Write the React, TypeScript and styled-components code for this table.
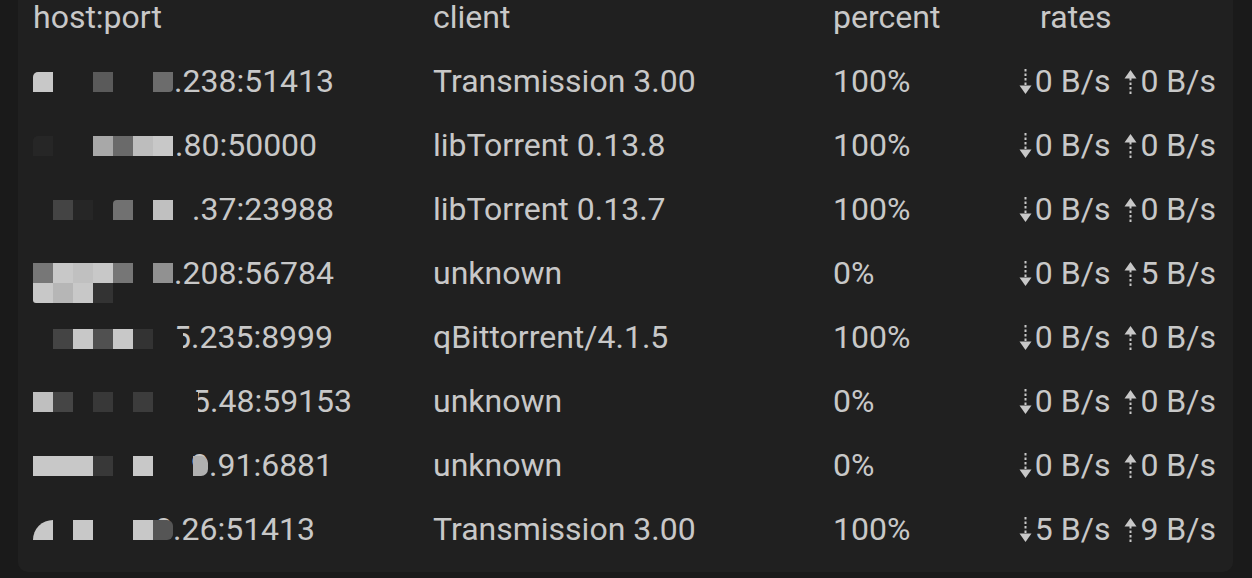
import React from 'react';
import styled, { createGlobalStyle } from 'styled-components';

const GlobalStyle = createGlobalStyle`
  html, body {
    margin: 0;
    padding: 0;
    background: #1a1a1a;
    overflow: hidden;
  }
  body {
    font-family: Roboto, "Liberation Sans", sans-serif;
  }
`;

const Panel = styled.div`
  margin: -15px 19px 0 18px;
  height: 587px;
  box-sizing: border-box;
  background: #202020;
  border-radius: 0 0 10px 10px;
  padding: 0 16px 0 15px;
  color: #c8c8c8;
  font-size: 32px;
`;

const Row = styled.div`
  display: grid;
  grid-template-columns: 400px 400px 180px 203px;
  height: 64px;
  align-items: center;
  white-space: nowrap;
`;

const Cell = styled.div<{ $right?: boolean; $indent?: number }>`
  display: flex;
  align-items: center;
  justify-content: ${({ $right }) => ($right ? 'flex-end' : 'flex-start')};
  padding-left: ${({ $indent }) => $indent ?? 0}px;
  min-width: 0;
`;

const HostText = styled.span<{ $offset: number }>`
  margin-left: ${({ $offset }) => $offset}px;
`;

// pixelated mask over the hidden part of the address; sits above the text
const Mosaic = styled.div<{ $cols: number; $rows: number; $top: number }>`
  display: grid;
  grid-template-columns: repeat(${({ $cols }) => $cols}, 20px);
  grid-template-rows: repeat(${({ $rows }) => $rows}, 20px);
  margin-top: ${({ $top }) => $top}px;
  flex: none;
  position: relative;
  z-index: 1;
`;

const Pixel = styled.div<{ $c: string; $round?: string; $w?: number }>`
  background: ${({ $c }) => $c};
  border-radius: ${({ $round }) => $round ?? '0'};
  width: ${({ $w }) => ($w ? `${$w}px` : 'auto')};
  justify-self: ${({ $w }) => ($w ? 'start' : 'stretch')};
`;

const Rates = styled.div`
  display: flex;
  align-items: center;
  gap: 14px;
`;

const Rate = styled.span`
  display: inline-flex;
  align-items: center;
  gap: 3px;
`;

const Arrow: React.FC<{ up?: boolean }> = ({ up }) => (
  <svg width="13" height="26" viewBox="0 0 13 26" style={{ marginTop: 1 }}>
    {up ? (
      <>
        <line x1="6.5" y1="9" x2="6.5" y2="26" stroke="#c8c8c8" strokeWidth="2" strokeDasharray="2.5 2" />
        <polygon points="6.5,1 0.5,9.5 12.5,9.5" fill="#c8c8c8" />
      </>
    ) : (
      <>
        <line x1="6.5" y1="0" x2="6.5" y2="17" stroke="#c8c8c8" strokeWidth="2" strokeDasharray="2.5 2" />
        <polygon points="6.5,25 0.5,16.5 12.5,16.5" fill="#c8c8c8" />
      </>
    )}
  </svg>
);

type Px = [number, number, string, string?, number?];

interface Peer {
  host: string;
  cols: number;
  rows: number;
  top: number;
  pixels: Px[];
  offset: number;
  client: string;
  percent: string;
  down: string;
  up: string;
}

const L = '#c8c8c8';
const BG = '#202020';

const peers: Peer[] = [
  {
    host: '.238:51413', cols: 7, rows: 1, top: 2, offset: 1,
    pixels: [[1, 1, L, '5px 0 0 0'], [4, 1, '#5a5a5a'], [7, 1, '#6c6c6c', '0 0 4px 0']],
    client: 'Transmission 3.00', percent: '100%', down: '0 B/s', up: '0 B/s',
  },
  {
    host: '.80:50000', cols: 7, rows: 1, top: 2, offset: 2,
    pixels: [[1, 1, '#262626', '5px 0 0 0'], [4, 1, '#a8a8a8'], [5, 1, '#6a6a6a'], [6, 1, '#bdbdbd'], [7, 1, L]],
    client: 'libTorrent 0.13.8', percent: '100%', down: '0 B/s', up: '0 B/s',
  },
  {
    host: '.37:23988', cols: 7, rows: 1, top: 2, offset: 19,
    pixels: [[2, 1, '#444'], [3, 1, '#262626'], [5, 1, '#717171', '4px 0 0 0'], [7, 1, '#c0c0c0']],
    client: 'libTorrent 0.13.7', percent: '100%', down: '0 B/s', up: '0 B/s',
  },
  {
    host: '.208:56784', cols: 7, rows: 2, top: 20, offset: 1,
    pixels: [
      [1, 1, '#777'], [2, 1, L], [3, 1, '#c0c0c0'], [4, 1, L], [5, 1, '#767676'], [7, 1, '#919191'],
      [1, 2, L, '0 0 0 3px'], [2, 2, '#b6b6b6'], [3, 2, L], [4, 2, '#333'],
    ],
    client: 'unknown', percent: '0%', down: '0 B/s', up: '5 B/s',
  },
  {
    host: '5.235:8999', cols: 8, rows: 1, top: 4, offset: -20,
    pixels: [[2, 1, '#444'], [3, 1, L], [4, 1, '#505050'], [5, 1, L], [6, 1, '#333'], [8, 1, BG, undefined, 10]],
    client: 'qBittorrent/4.1.5', percent: '100%', down: '0 B/s', up: '0 B/s',
  },
  {
    host: '5.48:59153', cols: 9, rows: 1, top: 2, offset: -21,
    pixels: [[1, 1, '#bfbfbf'], [2, 1, '#454545'], [4, 1, '#383838'], [6, 1, '#3c3c3c'], [9, 1, BG, undefined, 5]],
    client: 'unknown', percent: '0%', down: '0 B/s', up: '0 B/s',
  },
  {
    host: '9.91:6881', cols: 9, rows: 1, top: 2, offset: -22,
    pixels: [[1, 1, L], [2, 1, L], [3, 1, L], [4, 1, '#383838'], [6, 1, L], [9, 1, '#b0b0b0', '0 7px 7px 0', 15]],
    client: 'unknown', percent: '0%', down: '0 B/s', up: '0 B/s',
  },
  {
    host: '9.26:51413', cols: 7, rows: 1, top: 2, offset: -18,
    pixels: [[1, 1, L, '20px 0 0 0'], [3, 1, L], [6, 1, L], [7, 1, '#555', '0 6px 6px 0']],
    client: 'Transmission 3.00', percent: '100%', down: '5 B/s', up: '9 B/s',
  },
];

const App: React.FC = () => (
  <>
    <GlobalStyle />
    <Panel>
      <Row>
        <Cell>host:port</Cell>
        <Cell>client</Cell>
        <Cell>percent</Cell>
        <Cell $indent={27}>rates</Cell>
      </Row>
      {peers.map((p, i) => (
        <Row key={i}>
          <Cell>
            <Mosaic $cols={p.cols} $rows={p.rows} $top={p.top}>
              {p.pixels.map(([c, r, col, round, w], j) => (
                <Pixel key={j} $c={col} $round={round} $w={w} style={{ gridColumn: c, gridRow: r }} />
              ))}
            </Mosaic>
            <HostText $offset={p.offset}>{p.host}</HostText>
          </Cell>
          <Cell>{p.client}</Cell>
          <Cell>{p.percent}</Cell>
          <Cell $right>
            <Rates>
              <Rate><Arrow />{p.down}</Rate>
              <Rate><Arrow up />{p.up}</Rate>
            </Rates>
          </Cell>
        </Row>
      ))}
    </Panel>
  </>
);

export default App;
